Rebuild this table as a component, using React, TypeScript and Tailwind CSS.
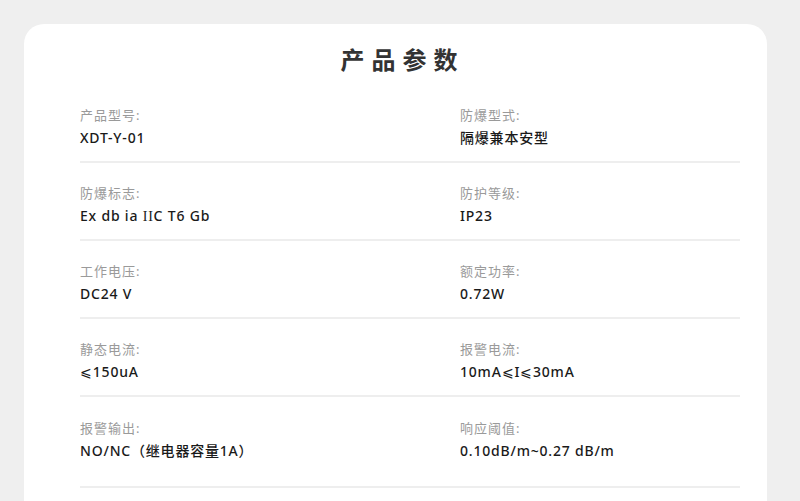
const rows: [string, React.ReactNode, string, React.ReactNode][] = [
  ["产品型号:", "XDT-Y-01", "防爆型式:", "隔爆兼本安型"],
  [
    "防爆标志:",
    <>
      Ex db ia <span style={{ fontFamily: '"Liberation Serif", serif' }}>II</span>C T6 Gb
    </>,
    "防护等级:",
    "IP23",
  ],
  ["工作电压:", "DC24 V", "额定功率:", "0.72W"],
  ["静态电流:", "⩽150uA", "报警电流:", "10mA⩽I⩽30mA"],
  ["报警输出:", "NO/NC（继电器容量1A）", "响应阈值:", "0.10dB/m~0.27 dB/m"],
];

function Cell({ label, value }: { label: string; value: React.ReactNode }) {
  return (
    <div className="flex flex-col">
      <span className="h-[20px] text-[13px] leading-[20px] tracking-[1px] text-[#9a9a9a]">{label}</span>
      <span className="mt-[2px] h-[22px] text-[14px] leading-[22px] font-medium tracking-[0.8px] text-[#1a1a1a]">
        {value}
      </span>
    </div>
  );
}

export default function App() {
  return (
    <div
      className="h-[501px] w-[800px] overflow-hidden bg-[#efefef] pt-[24px] pl-[24px]"
      style={{ fontFamily: '"Noto Sans", "Noto Sans CJK SC", sans-serif' }}
    >
      <div className="h-[520px] w-[743px] rounded-[20px] bg-white pt-[19px] pl-[56px]">
        <h1
          className="w-[660px] pr-[15px] text-center text-[24px] leading-[32px] font-bold tracking-[7px] text-[#333]"
          style={{ fontFamily: '"Noto Sans CJK SC", sans-serif' }}
        >
          产品参数
        </h1>
        <div className="mt-[10px] w-[660px]">
          {rows.map((r, i) => (
            <div
              key={r[0]}
              className={
                i === rows.length - 1
                  ? "grid grid-cols-[380px_280px] border-b-2 border-[#eeeeee] pt-[21px] pb-[24px]"
                  : "grid grid-cols-[380px_280px] border-b-2 border-[#eeeeee] pt-[20px] pb-[12px]"
              }
            >
              <Cell label={r[0]} value={r[1]} />
              <Cell label={r[2]} value={r[3]} />
            </div>
          ))}
        </div>
      </div>
    </div>
  );
}
